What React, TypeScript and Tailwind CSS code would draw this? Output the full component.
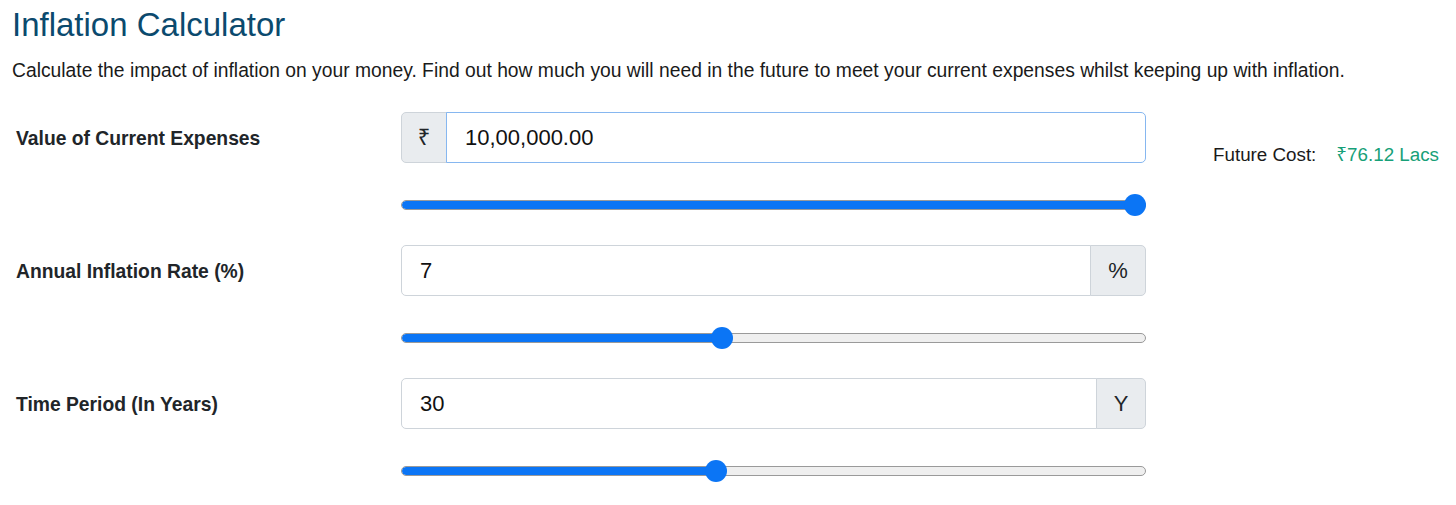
import React from "react";

function Slider({ frac }: { frac: number }) {
  const thumbRange = 745 - 22;
  const center = 11 + thumbRange * frac;
  return (
    <div className="relative w-full h-[22px] flex items-center">
      <div className="relative w-full h-[10px] rounded-full bg-[#efefef] border border-[#9a9a9a] overflow-hidden">
        <div className="h-full bg-[#0b75f5] rounded-full" style={{ width: `${center}px` }} />
      </div>
      <div
        className="absolute top-0 w-[22px] h-[22px] rounded-full bg-[#0b75f5]"
        style={{ left: `${center - 11}px` }}
      />
    </div>
  );
}

function Row({
  label,
  children,
  frac,
  right,
}: {
  label: string;
  children: React.ReactNode;
  frac: number;
  right?: React.ReactNode;
}) {
  return (
    <div className="flex items-start">
      <div className="w-[389px] h-[51px] flex items-center pl-[4px] pt-[3px] text-[19.3px] font-bold text-[#212529]">
        {label}
      </div>
      <div className="w-[745px] flex flex-col">
        {children}
        <div className="h-[82px] flex items-center pt-[2px]">
          <Slider frac={frac} />
        </div>
      </div>
      {right}
    </div>
  );
}

export default function App() {
  return (
    <div
      className="bg-white min-h-[505px] px-[12px] text-[#212529]"
      style={{ fontFamily: '"Liberation Sans", "Noto Sans", "DejaVu Sans", Arial, sans-serif' }}
    >
      <h1 className="pt-[6px] text-[33px] leading-[38px] text-[#0b4a6e]">Inflation Calculator</h1>
      <p className="mt-[13px] text-[19.3px] leading-[27px] text-[#1a1a1a]">
        Calculate the impact of inflation on your money. Find out how much you will need in the future to meet your
        current expenses whilst keeping up with inflation.
      </p>
      <div className="mt-[28px] flex flex-col">
        <Row
          label="Value of Current Expenses"
          frac={1}
          right={
            <div className="pl-[67px] pt-[29px] text-[18.8px] leading-[27px] flex gap-[20px] whitespace-nowrap">
              <span className="text-[#1a1a1a]">Future Cost:</span>
              <span className="text-[#17a078]">₹76.12 Lacs</span>
            </div>
          }
        >
          <div className="flex h-[51px]">
            <div className="w-[46px] flex items-center justify-center bg-[#e9ecef] border border-[#ced4da] rounded-l-[5px] text-[22px] text-[#212529]">
              ₹
            </div>
            <div className="flex-1 flex items-center pl-[18px] border border-[#86b7f0] -ml-px rounded-r-[5px] text-[22px] text-[#111]">
              10,00,000.00
            </div>
          </div>
        </Row>
        <Row label="Annual Inflation Rate (%)" frac={0.429}>
          <div className="flex h-[51px]">
            <div className="flex-1 flex items-center pl-[18px] border border-[#ced4da] rounded-l-[5px] text-[22px] text-[#111]">
              7
            </div>
            <div className="w-[56px] -ml-px flex items-center justify-center bg-[#e9ecef] border border-[#ced4da] rounded-r-[5px] text-[22px] text-[#212529]">
              %
            </div>
          </div>
        </Row>
        <Row label="Time Period (In Years)" frac={0.42}>
          <div className="flex h-[51px]">
            <div className="flex-1 flex items-center pl-[18px] border border-[#ced4da] rounded-l-[5px] text-[22px] text-[#111]">
              30
            </div>
            <div className="w-[50px] -ml-px flex items-center justify-center bg-[#e9ecef] border border-[#ced4da] rounded-r-[5px] text-[22px] text-[#212529]">
              Y
            </div>
          </div>
        </Row>
      </div>
    </div>
  );
}
